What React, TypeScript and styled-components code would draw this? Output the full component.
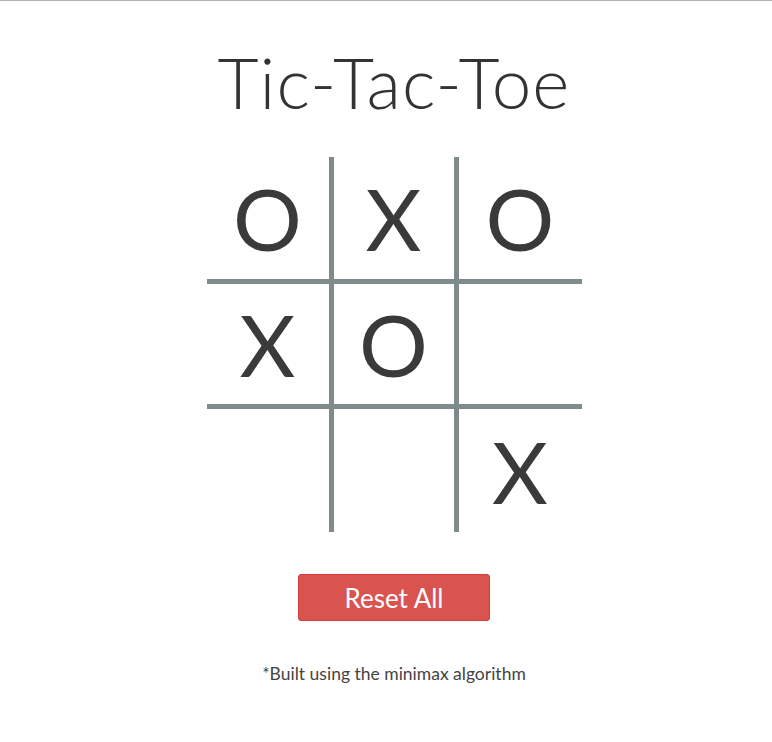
import styled, { createGlobalStyle } from 'styled-components';

type Mark = 'X' | 'O' | '';

const board: Mark[] = ['O', 'X', 'O', 'X', 'O', '', '', '', 'X'];

export default function App() {
    return (
        <>
            <GlobalStyle />
            <Page>
                <Title>Tic-Tac-Toe</Title>
                <Board>
                    {board.map((mark, index) => (
                        <Cell key={index} $right={index % 3 < 2} $bottom={index < 6}>
                            {mark}
                        </Cell>
                    ))}
                </Board>
                <ResetButton>Reset All</ResetButton>
                <Footer>*Built using the minimax algorithm</Footer>
            </Page>
        </>
    );
}

const GlobalStyle = createGlobalStyle`
    html, body {
        margin: 0;
        padding: 0;
        background: #fff;
    }
    body {
        font-family: 'Lato', 'Noto Sans', sans-serif;
        color: #333;
    }
`;

const Page = styled.div`
    border-top: 1px solid #b1b1b1;
    padding: 0 0 0 16px;
    display: flex;
    flex-direction: column;
    align-items: center;
`;

const Title = styled.h1`
    margin: 38px 0 0;
    font-size: 71px;
    font-weight: 300;
    line-height: 86px;
    letter-spacing: 1px;
    color: #333;
`;

const Board = styled.div`
    margin-top: 32px;
    display: grid;
    grid-template-columns: 127px 125px 123px;
    grid-template-rows: 127px 125px 123px;
`;

const Cell = styled.div<{ $right: boolean; $bottom: boolean }>`
    box-sizing: border-box;
    border-right: ${(p) => (p.$right ? '5px solid #7f8b8b' : 'none')};
    border-bottom: ${(p) => (p.$bottom ? '5px solid #7f8b8b' : 'none')};
    display: flex;
    align-items: center;
    justify-content: center;
    font-size: 86px;
    font-weight: 400;
    color: #3a3a3a;
    line-height: 1;
`;

const ResetButton = styled.button`
    margin-top: 42px;
    width: 192px;
    height: 47px;
    background: #d9534f;
    border: 1px solid #d43f3a;
    border-radius: 3px;
    color: #fff;
    font-family: 'Lato', 'Noto Sans', sans-serif;
    font-size: 26px;
    font-weight: 400;
    cursor: pointer;
`;

const Footer = styled.p`
    margin: 42px 0 0;
    font-size: 17.5px;
    font-weight: 400;
    color: #444;
`;
